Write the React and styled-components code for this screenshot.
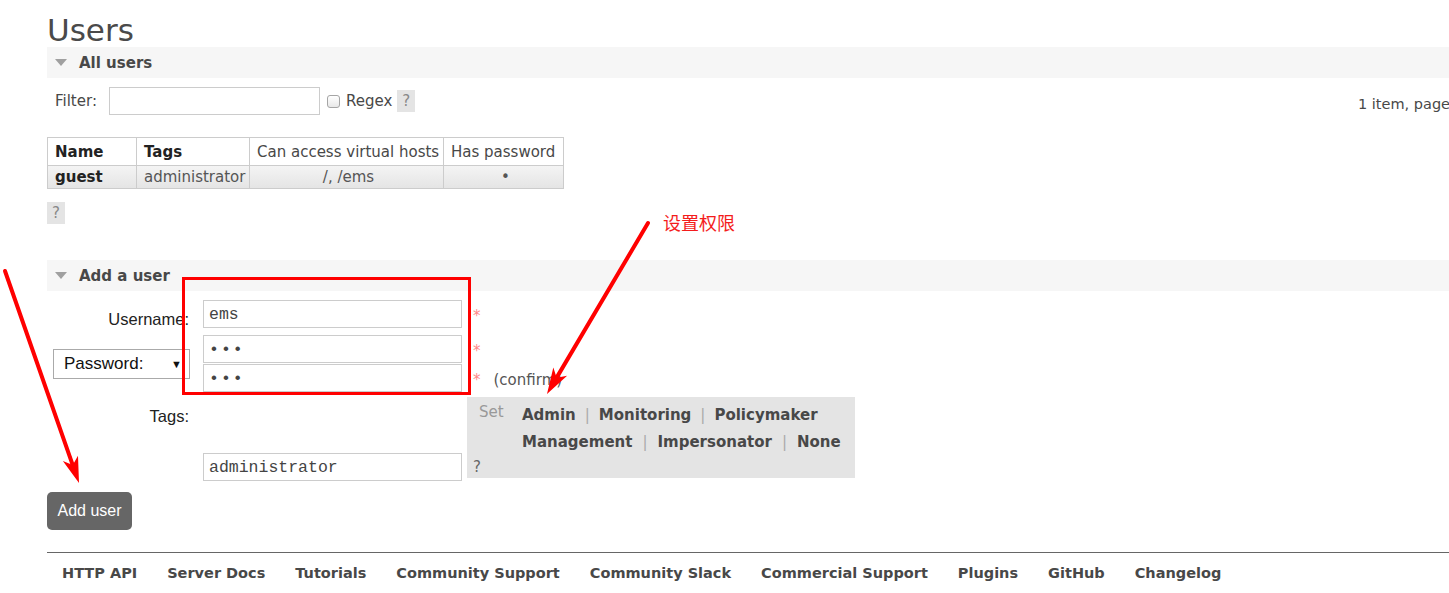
import React from "react";
import styled, { createGlobalStyle } from "styled-components";

const GlobalStyle = createGlobalStyle`
  html, body {
    margin: 0;
    padding: 0;
    background: #fff;
    overflow: hidden;
  }
  body {
    font-family: "DejaVu Sans", Verdana, sans-serif;
    color: #484848;
  }
`;

const Root = styled.div`
  position: relative;
  width: 1449px;
  height: 593px;
  overflow: hidden;
`;

const Page = styled.div`
  width: 1500px;
  padding: 14px 0 0 47px;
  box-sizing: border-box;
`;

const Title = styled.h1`
  margin: 0;
  font-size: 31px;
  line-height: 33px;
  font-weight: normal;
  color: #4a4a4a;
`;

const SectionBar = styled.div`
  height: 31px;
  margin-top: ${(p) => p.$top || 0}px;
  background: #f6f6f6;
  display: flex;
  align-items: center;
  padding-left: 8px;
  font-size: 15px;
  font-weight: bold;
  color: #484848;
`;

const Triangle = styled.span`
  width: 0;
  height: 0;
  border-left: 6px solid transparent;
  border-right: 6px solid transparent;
  border-top: 7px solid #a0a0a0;
  margin-right: 12px;
`;

const FilterRow = styled.div`
  display: flex;
  align-items: center;
  margin-top: 9px;
  height: 28px;
  font-size: 15px;
`;

const FilterGroup = styled.div`
  flex: 0 0 1311px;
  display: flex;
  align-items: center;
  padding-left: 8px;
  box-sizing: border-box;
`;

const FilterInput = styled.input`
  width: 211px;
  height: 28px;
  box-sizing: border-box;
  border: 1px solid #ccc;
  margin: 0 7px 0 12px;
  padding: 0 5px;
  outline: none;
`;

const CheckBox = styled.span`
  width: 11px;
  height: 11px;
  border: 1px solid #a5a5a5;
  border-radius: 3px;
  background: linear-gradient(#fff, #e8e8e8);
  margin-right: 6px;
`;

const Help = styled.span`
  display: inline-flex;
  align-items: center;
  justify-content: center;
  width: 18px;
  height: 22px;
  background: #e4e4e4;
  color: #888;
  font-size: 15px;
  margin-left: ${(p) => p.$left || 0}px;
  margin-top: ${(p) => p.$top || 0}px;
`;

const Paging = styled.span`
  padding-top: 6px;
  white-space: nowrap;
  font-size: 14.5px;
`;

const Table = styled.table`
  border-collapse: collapse;
  table-layout: fixed;
  margin-top: 22px;
  font-size: 15px;
`;

const Th = styled.th`
  border: 1px solid #ccc;
  height: 28px;
  padding: 0 3px 0 7px;
  text-align: left;
  white-space: nowrap;
  font-weight: ${(p) => (p.$bold ? "bold" : "normal")};
  color: ${(p) => (p.$bold ? "#222" : "#484848")};
  box-sizing: border-box;
`;

const DataRow = styled.tr`
  background: linear-gradient(#f4f4f4, #e4e4e4);
`;

const Td = styled.td`
  border: 1px solid #ccc;
  height: 23px;
  padding: 0 3px 0 7px;
  white-space: nowrap;
  text-align: ${(p) => (p.$center ? "center" : "left")};
  font-weight: ${(p) => (p.$bold ? "bold" : "normal")};
  color: ${(p) => (p.$bold ? "#222" : "#555")};
  box-sizing: border-box;
`;

const HelpRow = styled.div`
  display: flex;
`;

const Form = styled.div`
  display: grid;
  grid-template-columns: 156px 259px auto;
  margin-top: 9px;
`;

const Label = styled.div`
  font-family: "Liberation Sans", Arial, sans-serif;
  font-size: 16.5px;
  color: #222;
  text-align: right;
  padding-right: 14px;
  padding-top: ${(p) => p.$top || 0}px;
  margin-top: ${(p) => p.$mt || 0}px;
  display: flex;
  justify-content: flex-end;
  align-items: ${(p) => (p.$center ? "center" : "flex-start")};
`;

const Field = styled.input`
  display: block;
  width: 259px;
  height: 28px;
  box-sizing: border-box;
  border: 1px solid #ccc;
  padding: 0 5px;
  font-family: "Liberation Mono", "Courier New", monospace;
  font-size: 16.5px;
  color: #444;
  letter-spacing: ${(p) => p.$spacing || 0}px;
  outline: none;
  background: #fff;
`;

const FieldStack = styled.div`
  display: flex;
  flex-direction: column;
  gap: 1px;
  margin-top: ${(p) => p.$mt || 0}px;
  justify-content: ${(p) => (p.$end ? "flex-end" : "flex-start")};
`;

const Side = styled.div`
  margin-left: 5px;
  margin-top: ${(p) => p.$mt || 0}px;
  display: flex;
  flex-direction: column;
  gap: 1px;
`;

const Required = styled.div`
  height: 28px;
  display: flex;
  align-items: center;
  padding-left: 6px;
  font-size: 15px;
  color: #555;
`;

const Star = styled.span`
  color: #f88;
  margin-right: 13px;
  position: relative;
  top: 2px;
`;

const Confirm = styled.span`
  position: relative;
  top: 2px;
`;

const SelectBox = styled.div`
  width: 137px;
  height: 30px;
  margin-right: -1px;
  box-sizing: border-box;
  border: 1px solid #aaa;
  background: #fff;
  display: flex;
  align-items: center;
  justify-content: space-between;
  padding: 0 7px 0 10px;
  font-family: "Liberation Sans", Arial, sans-serif;
  font-size: 17px;
  color: #111;
`;

const Caret = styled.span`
  font-size: 11px;
  color: #111;
`;

const TagBox = styled.div`
  width: 388px;
  height: 81px;
  box-sizing: border-box;
  background: #e4e4e4;
  display: flex;
  flex-direction: column;
  justify-content: space-between;
  padding: 5px 0 0 6px;
`;

const TagTop = styled.div`
  display: flex;
`;

const SetWord = styled.span`
  width: 43px;
  padding-left: 6px;
  color: #999;
  font-size: 15px;
  line-height: 20px;
`;

const TagLinks = styled.div`
  display: flex;
  flex-direction: column;
  gap: 7px;
  padding-top: 3px;
`;

const TagLine = styled.div`
  display: flex;
  align-items: center;
  line-height: 20px;
  font-size: 15px;
  font-weight: bold;
  color: #484848;
`;

const Sep = styled.span`
  color: #aaa;
  font-weight: normal;
  margin: 0 ${(p) => p.$m}px;
`;

const TagHelp = styled.span`
  font-size: 15px;
  color: #666;
  line-height: 22px;
`;

const Button = styled.div`
  margin-top: 14px;
  width: 85px;
  height: 38px;
  border-radius: 5px;
  background: #666;
  color: #fff;
  display: flex;
  align-items: center;
  justify-content: center;
  font-family: "Liberation Sans", Arial, sans-serif;
  font-size: 16px;
`;

const Footer = styled.div`
  margin-top: 22px;
  border-top: 1px solid #666;
  display: flex;
  gap: 30px;
  padding: 12px 0 0 15px;
  font-size: 14.5px;
  font-weight: bold;
  color: #484848;
`;

const Overlay = styled.svg`
  position: absolute;
  left: 0;
  top: 0;
  pointer-events: none;
`;

const RedBox = styled.div`
  position: absolute;
  left: 182px;
  top: 277px;
  width: 283px;
  height: 112px;
  border: 3px solid #f00;
`;

const Note = styled.div`
  position: absolute;
  left: 663px;
  top: 210px;
  font-family: "Noto Sans CJK SC", sans-serif;
  font-size: 18px;
  line-height: 24px;
  color: #f41c1c;
`;

const Arrow = ({ x1, y1, x2, y2 }) => {
  const dx = x2 - x1;
  const dy = y2 - y1;
  const len = Math.hypot(dx, dy);
  const ux = dx / len;
  const uy = dy / len;
  const bx = x2 - 26 * ux;
  const by = y2 - 26 * uy;
  const ix = x2 - 19 * ux;
  const iy = y2 - 19 * uy;
  const px = -uy * 8;
  const py = ux * 8;
  const pts = `${x2},${y2} ${bx + px},${by + py} ${ix},${iy} ${bx - px},${by - py}`;
  return (
    <g>
      <line x1={x1} y1={y1} x2={ix} y2={iy} stroke="#f00" strokeWidth="4" strokeLinecap="round" />
      <polygon points={pts} fill="#f00" />
    </g>
  );
};

const footerLinks = [
  "HTTP API",
  "Server Docs",
  "Tutorials",
  "Community Support",
  "Community Slack",
  "Commercial Support",
  "Plugins",
  "GitHub",
  "Changelog",
];

const TagLinkRow = ({ items, gap }) => (
  <TagLine>
    {items.map((t, i) => (
      <React.Fragment key={t}>
        {i > 0 && <Sep $m={gap}>|</Sep>}
        <span>{t}</span>
      </React.Fragment>
    ))}
  </TagLine>
);

export default function App() {
  return (
    <Root>
      <GlobalStyle />
      <Page>
        <Title>Users</Title>
        <SectionBar>
          <Triangle />
          All users
        </SectionBar>
        <FilterRow>
          <FilterGroup>
            Filter:
            <FilterInput readOnly value="" />
            <CheckBox />
            Regex
            <Help $left={5}>?</Help>
          </FilterGroup>
          <Paging>1 item, page</Paging>
        </FilterRow>

        <Table>
          <colgroup>
            <col style={{ width: 89 }} />
            <col style={{ width: 113 }} />
            <col style={{ width: 194 }} />
            <col style={{ width: 120 }} />
          </colgroup>
          <thead>
            <tr>
              <Th $bold>Name</Th>
              <Th $bold>Tags</Th>
              <Th>Can access virtual hosts</Th>
              <Th>Has password</Th>
            </tr>
          </thead>
          <tbody>
            <DataRow>
              <Td $bold>guest</Td>
              <Td>administrator</Td>
              <Td $center>/, /ems</Td>
              <Td $center>•</Td>
            </DataRow>
          </tbody>
        </Table>
        <HelpRow>
          <Help $top={13}>?</Help>
        </HelpRow>

        <SectionBar $top={36}>
          <Triangle />
          Add a user
        </SectionBar>

        <Form>
          <Label $top={10}>Username:</Label>
          <FieldStack>
            <Field readOnly value="ems" />
          </FieldStack>
          <Side>
            <Required>
              <Star>*</Star>
            </Required>
          </Side>

          <Label $center $mt={6}>
            <SelectBox>
              Password:
              <Caret>▼</Caret>
            </SelectBox>
          </Label>
          <FieldStack $mt={6}>
            <Field readOnly value="•••" $spacing={2} />
            <Field readOnly value="•••" $spacing={2} />
          </FieldStack>
          <Side $mt={6}>
            <Required>
              <Star>*</Star>
            </Required>
            <Required>
              <Star>*</Star>
              <Confirm>(confirm)</Confirm>
            </Required>
          </Side>

          <Label $top={10} $mt={5}>Tags:</Label>
          <FieldStack $mt={5} $end>
            <Field readOnly value="administrator" style={{ marginBottom: -3 }} />
          </FieldStack>
          <Side $mt={5}>
            <TagBox>
              <TagTop>
                <SetWord>Set</SetWord>
                <TagLinks>
                  <TagLinkRow gap={9} items={["Admin", "Monitoring", "Policymaker"]} />
                  <TagLinkRow gap={10} items={["Management", "Impersonator", "None"]} />
                </TagLinks>
              </TagTop>
              <TagHelp>?</TagHelp>
            </TagBox>
          </Side>
        </Form>

        <Button>Add user</Button>

        <Footer>
          {footerLinks.map((l) => (
            <span key={l}>{l}</span>
          ))}
        </Footer>
      </Page>

      <RedBox />
      <Note>设置权限</Note>
      <Overlay width="1449" height="593" viewBox="0 0 1449 593">
        <Arrow x1={5} y1={271} x2={79} y2={483} />
        <Arrow x1={648} y1={223} x2={547} y2={394} />
      </Overlay>
    </Root>
  );
}
